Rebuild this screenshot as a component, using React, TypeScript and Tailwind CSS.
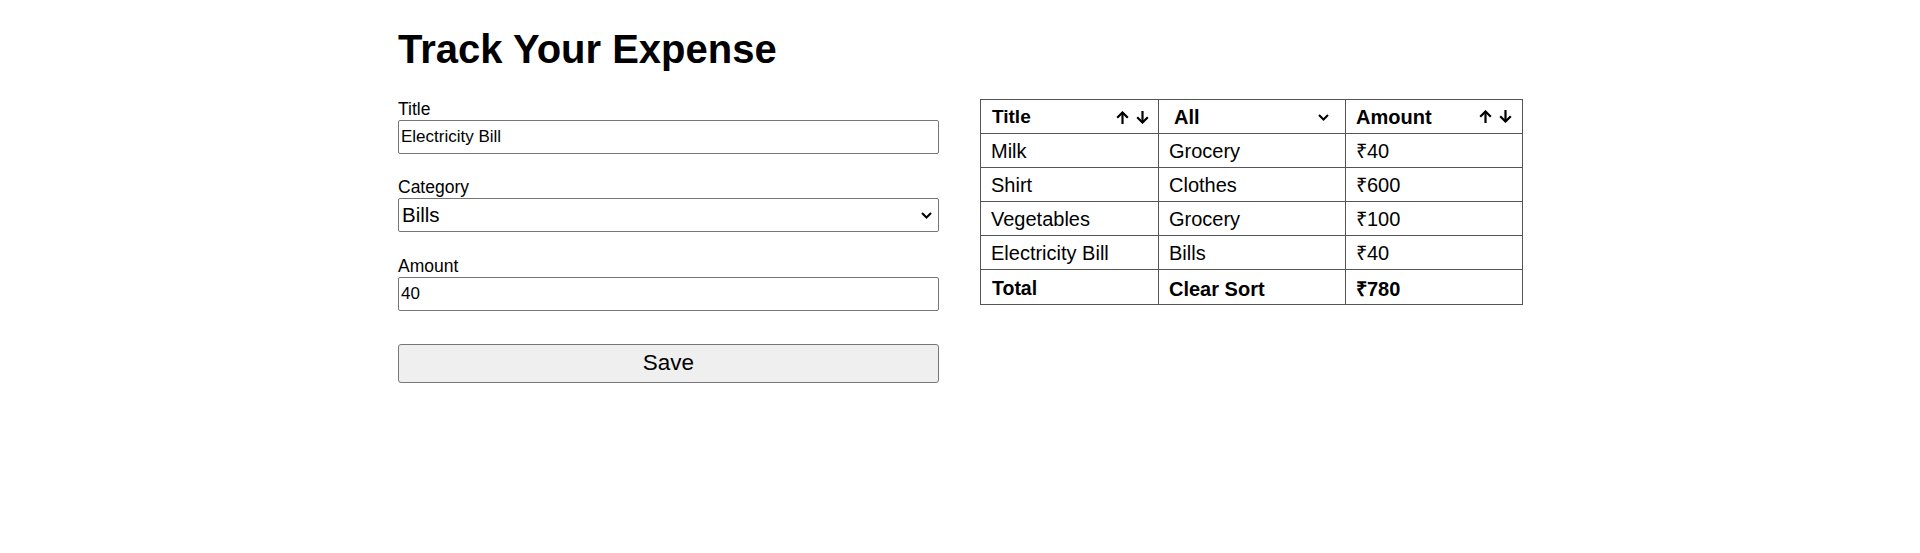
import React from "react";

function ArrowUpIcon() {
  return (
    <svg width="13" height="13" viewBox="0 0 13 13" fill="none" stroke="#000" strokeWidth="2.2" strokeLinecap="butt" strokeLinejoin="miter">
      <path d="M6.5 1.5V13" />
      <path d="M1.2 6.8L6.5 1.5L11.8 6.8" />
    </svg>
  );
}

function ArrowDownIcon() {
  return (
    <svg width="13" height="13" viewBox="0 0 13 13" fill="none" stroke="#000" strokeWidth="2.2" strokeLinecap="butt" strokeLinejoin="miter">
      <path d="M6.5 0V11.5" />
      <path d="M1.2 6.2L6.5 11.5L11.8 6.2" />
    </svg>
  );
}

function Chevron() {
  return (
    <svg width="11" height="7" viewBox="0 0 11 7" fill="none" stroke="#000" strokeWidth="2">
      <path d="M1 1L5.5 5.5L10 1" />
    </svg>
  );
}

function SortArrows() {
  return (
    <span className="flex items-center gap-[7px]">
      <ArrowUpIcon />
      <ArrowDownIcon />
    </span>
  );
}

const rows = [
  { title: "Milk", category: "Grocery", amount: "₹40" },
  { title: "Shirt", category: "Clothes", amount: "₹600" },
  { title: "Vegetables", category: "Grocery", amount: "₹100" },
  { title: "Electricity Bill", category: "Bills", amount: "₹40" },
];

export default function App() {
  return (
    <div className="min-h-[553px] bg-white text-black font-['Liberation_Sans',Arial,sans-serif] pl-[398px] pt-[29px]">
      <h1 className="text-[40px] leading-[40px] font-bold">Track Your Expense</h1>
      <div className="flex items-start gap-[41px]">
        <form className="w-[541px] pt-[29px] flex flex-col" onSubmit={(e) => e.preventDefault()}>
          <label className="block text-[17.5px] leading-[20px] pt-[1px]">Title</label>
          <input
            className="mt-[1px] h-[34px] w-full border border-[#767676] rounded-[2px] px-[2px] text-[17px] outline-none"
            defaultValue="Electricity Bill"
          />
          <label className="mt-[23px] block text-[17.5px] leading-[20px]">Category</label>
          <div className="relative mt-[1px]">
            <select
              className="h-[34px] w-full appearance-none border border-[#767676] rounded-[2px] pl-[3px] text-[20.5px] bg-white outline-none"
              defaultValue="Bills"
            >
              <option>Grocery</option>
              <option>Clothes</option>
              <option>Bills</option>
            </select>
            <span className="pointer-events-none absolute right-[7px] top-[14px] flex">
              <Chevron />
            </span>
          </div>
          <label className="mt-[24px] block text-[17.5px] leading-[20px]">Amount</label>
          <input
            className="mt-[1px] h-[34px] w-full border border-[#767676] rounded-[2px] px-[2px] text-[17px] outline-none"
            defaultValue="40"
          />
          <button
            type="submit"
            className="mt-[33px] h-[39px] w-full bg-[#efefef] border border-[#767676] rounded-[3px] text-[22.5px] leading-none"
          >
            Save
          </button>
        </form>
        <div className="pt-[30px]">
          <table className="table-fixed border-collapse w-[542px] text-[20px]">
            <colgroup>
              <col className="w-[178px]" />
              <col className="w-[187px]" />
              <col className="w-[177px]" />
            </colgroup>
            <thead>
              <tr className="h-[34px]">
                <th className="border border-[#555] pl-[11px] pr-[9px] pt-[2px] text-left font-bold text-[19px]">
                  <div className="flex items-center justify-between">
                    <span>Title</span>
                    <SortArrows />
                  </div>
                </th>
                <th className="border border-[#555] pl-[10px] pr-[16px] pt-[1px] text-left font-bold text-[20px]">
                  <div className="relative">
                    <select className="w-full appearance-none bg-transparent font-bold text-[20px] pl-[5px] outline-none" defaultValue="All">
                      <option>All</option>
                      <option>Grocery</option>
                      <option>Clothes</option>
                      <option>Bills</option>
                    </select>
                    <span className="pointer-events-none absolute right-0 top-[12px] flex">
                      <Chevron />
                    </span>
                  </div>
                </th>
                <th className="border border-[#555] pl-[10px] pr-[10px] text-left font-bold text-[20px]">
                  <div className="flex items-center justify-between">
                    <span>Amount</span>
                    <SortArrows />
                  </div>
                </th>
              </tr>
            </thead>
            <tbody>
              {rows.map((r) => (
                <tr key={r.title} className="h-[34px]">
                  <td className="border border-[#555] px-[10px]">{r.title}</td>
                  <td className="border border-[#555] px-[10px]">{r.category}</td>
                  <td className="border border-[#555] px-[10px]">{r.amount}</td>
                </tr>
              ))}
              <tr className="h-[34px] font-bold">
                <td className="border border-[#555] px-[11px] pt-[4px] text-[19.5px]">Total</td>
                <td className="border border-[#555] px-[10px] pt-[4px] text-[20px]">Clear Sort</td>
                <td className="border border-[#555] px-[10px] pt-[4px] text-[20px]">₹780</td>
              </tr>
            </tbody>
          </table>
        </div>
      </div>
    </div>
  );
}
